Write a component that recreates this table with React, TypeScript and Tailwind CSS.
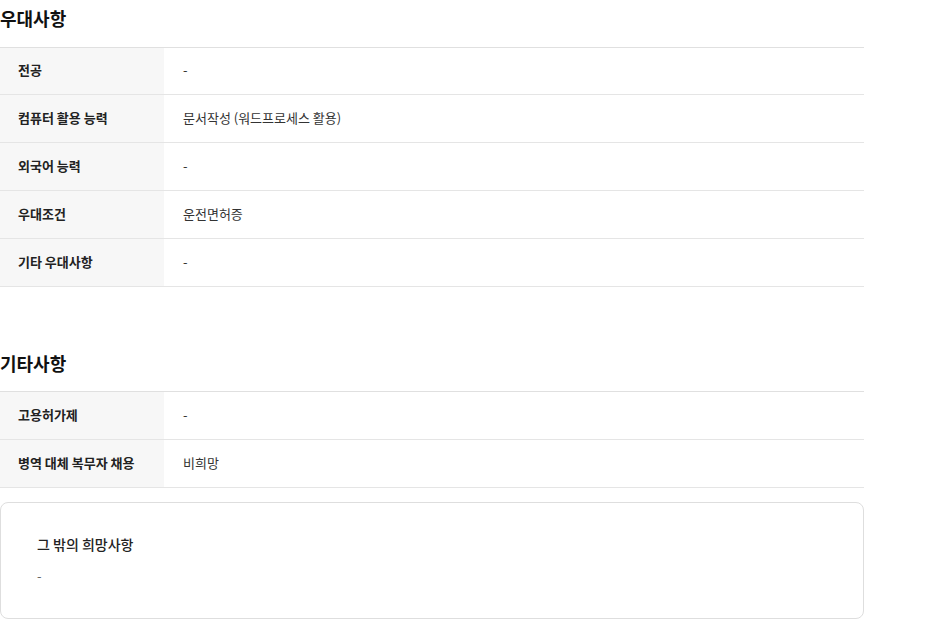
import React from "react";

const font = { fontFamily: '"Noto Sans CJK KR", "Noto Sans", sans-serif' };

function Row({ label, value, h = "h-[48px]" }: { label: string; value: string; h?: string }) {
  return (
    <div className={`flex ${h} border-b border-[#e5e5e5]`}>
      <div className="w-[164px] shrink-0 bg-[#f7f7f7] pl-[18px] pb-[2px] flex items-center text-[13px] font-bold text-[#222]">
        {label}
      </div>
      <div className="flex-1 pl-[19px] pb-[2px] flex items-center text-[13px] text-[#333]">{value}</div>
    </div>
  );
}

export default function App() {
  return (
    <div className="w-[946px] h-[637px] bg-white overflow-hidden" style={font}>
      <div className="w-[864px]">
        <h2 className="text-[18px] font-bold text-[#111] leading-[36px] mb-[11px]">우대사항</h2>
        <div className="border-t border-[#e0e0e0]">
          <Row label="전공" value="-" h="h-[47px]" />
          <Row label="컴퓨터 활용 능력" value="문서작성 (워드프로세스 활용)" />
          <Row label="외국어 능력" value="-" />
          <Row label="우대조건" value="운전면허증" />
          <Row label="기타 우대사항" value="-" />
        </div>
        <h2 className="mt-[58px] text-[18px] font-bold text-[#111] leading-[36px] mb-[10px]">기타사항</h2>
        <div className="border-t border-[#e0e0e0]">
          <Row label="고용허가제" value="-" />
          <Row label="병역 대체 복무자 채용" value="비희망" />
        </div>
        <div className="mt-[14px] h-[117px] border border-[#dedede] rounded-[8px] pl-[36px] pt-[31px]">
          <div className="text-[14px] font-medium text-[#222] leading-[20px]">그 밖의 희망사항</div>
          <div className="mt-[12px] text-[13px] text-[#666] leading-[20px]">-</div>
        </div>
      </div>
    </div>
  );
}
